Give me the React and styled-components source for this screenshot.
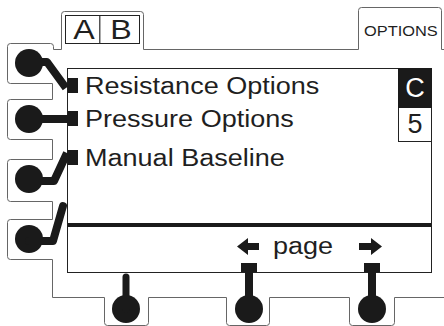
import styled, { createGlobalStyle } from "styled-components";

const GlobalStyle = createGlobalStyle`
  body {
    margin: 0;
    background: #fff;
    font-family: "Liberation Sans", Arial, sans-serif;
    color: #1f1f1f;
  }
`;

const Frame = styled.div`
  position: relative;
  width: 444px;
  height: 326px;
  overflow: hidden;
  background: #fff;
`;

const Header = styled.div`
  display: flex;
  align-items: flex-start;
  height: 68px;
`;

const TabBox = styled.div`
  display: flex;
  box-sizing: border-box;
  width: 75px;
  height: 29px;
  margin: 15px 0 0 65px;
  border: 1px solid #222;
`;

const TabCell = styled.div`
  width: ${(p) => (p.$first ? "36px" : "auto")};
  flex: ${(p) => (p.$first ? "none" : "1")};
  border-left: ${(p) => (p.$first ? "none" : "1px solid #222")};
  text-align: center;
  font-size: 28px;
  line-height: 27px;
  transform: scaleX(1.15);
`;

const OptionsLabel = styled.div`
  width: 64px;
  margin: 23px 16px 0 auto;
  font-size: 14px;
  line-height: 16px;
  white-space: nowrap;
  transform: scaleX(1.17);
  transform-origin: left;
`;

const Screen = styled.div`
  box-sizing: border-box;
  display: flex;
  flex-direction: column;
  width: 365px;
  height: 205px;
  margin-left: 67px;
  border: 1px solid #222;
`;

const TopArea = styled.div`
  display: flex;
  height: 154px;
`;

const Menu = styled.div`
  flex: 1;
  padding-top: 3px;
`;

const MenuRow = styled.div`
  display: flex;
  align-items: flex-start;
  margin-top: ${(p) => p.$gap || 0}px;
`;

const Bullet = styled.span`
  width: 10px;
  height: 15px;
  margin-top: 6px;
  background: #1a1a1a;
  flex: none;
`;

const MenuLabel = styled.span`
  margin-left: 7px;
  font-size: 23.5px;
  line-height: 28px;
  white-space: nowrap;
  transform: scaleX(1.15);
  transform-origin: left;
`;

const SideColumn = styled.div`
  display: flex;
  flex-direction: column;
  width: 34px;
  margin: -1px -1px 0 0;
`;

const Indicator = styled.div`
  box-sizing: border-box;
  height: ${(p) => (p.$dark ? 40 : 34)}px;
  border: ${(p) => (p.$dark ? "none" : "1px solid #222")};
  border-top: none;
  background: ${(p) => (p.$dark ? "#1a1a1a" : "#fff")};
  color: ${(p) => (p.$dark ? "#fff" : "#1f1f1f")};
  font-size: 27px;
  line-height: ${(p) => (p.$dark ? 40 : 33)}px;
  text-align: center;
`;

const Divider = styled.div`
  height: 4px;
  background: #1a1a1a;
`;

const PageRow = styled.div`
  display: flex;
  align-items: flex-start;
  padding-left: 169px;
`;

const Arrow = styled.svg`
  margin-top: 11px;
  margin-left: ${(p) => p.$gap || 0}px;
  flex: none;
`;

const PageLabel = styled.span`
  width: 62px;
  margin: 5px 0 0 14px;
  font-size: 23.5px;
  line-height: 28px;
  transform: scaleX(1.15);
  transform-origin: left;
`;

const Overlay = styled.svg`
  position: absolute;
  inset: 0;
  pointer-events: none;
`;

const outline =
  "M444,49 H441 V10 Q441,7 438,7 H361 Q358,7 358,10 V49 H143 V14 Q143,11 140,11 H64 Q61,11 61,14 V49 H53 V46 Q53,43 50,43 H10 Q7,43 7,46 V80 Q7,83 10,83 H52 V99 H10 Q7,99 7,102 V136 Q7,139 10,139 H52 V159 H10 Q7,159 7,162 V198 Q7,201 10,201 H52 V219 H10 Q7,219 7,222 V256 Q7,259 10,259 H52 V297 H104 V322 Q104,325 107,325 H145 Q148,325 148,322 V297 H226 V322 Q226,325 229,325 H266 Q269,325 269,322 V297 H349 V322 Q349,325 352,325 H391 Q394,325 394,322 V297 H444";

const menuItems = [
  { label: "Resistance Options", gap: 0 },
  { label: "Pressure Options", gap: 5 },
  { label: "Manual Baseline", gap: 11 },
];

function Knobs() {
  const ink = "#1a1a1a";
  return (
    <Overlay width="444" height="326" viewBox="0 0 444 326">
      <path d={outline} transform="translate(0.5 0.5)" fill="none" stroke="#666" strokeWidth="1" />
      <g fill={ink}>
        <circle cx="29" cy="63" r="14" />
        <circle cx="29" cy="119" r="14" />
        <circle cx="29" cy="179" r="14" />
        <circle cx="29" cy="239" r="14" />
        <circle cx="126" cy="309" r="14" />
        <circle cx="249" cy="309" r="14" />
        <circle cx="372" cy="309" r="14" />
        <rect x="241" y="263" width="16" height="9" />
        <rect x="364" y="263" width="16" height="9" />
      </g>
      <g fill="none" stroke={ink} strokeWidth="8" strokeLinejoin="round">
        <path d="M29,62 H47 L66,88" />
        <path d="M29,119 H68" />
        <path d="M29,181 H54 L67,153" />
        <path d="M29,241 H53 L63,206" strokeLinecap="round" />
        <path d="M126,309 V277" strokeWidth="7" strokeLinecap="round" />
        <path d="M249,309 V270" />
        <path d="M372,309 V270" />
      </g>
    </Overlay>
  );
}

export default function App() {
  return (
    <Frame>
      <GlobalStyle />
      <Header>
        <TabBox>
          <TabCell $first>A</TabCell>
          <TabCell>B</TabCell>
        </TabBox>
        <OptionsLabel>OPTIONS</OptionsLabel>
      </Header>
      <Screen>
        <TopArea>
          <Menu>
            {menuItems.map((item) => (
              <MenuRow key={item.label} $gap={item.gap}>
                <Bullet />
                <MenuLabel>{item.label}</MenuLabel>
              </MenuRow>
            ))}
          </Menu>
          <SideColumn>
            <Indicator $dark>C</Indicator>
            <Indicator>5</Indicator>
          </SideColumn>
        </TopArea>
        <Divider />
        <PageRow>
          <Arrow width="22" height="17" viewBox="0 0 22 17">
            <polygon points="0,8.5 11,0 11,5 22,5 22,12 11,12 11,17" fill="#1a1a1a" />
          </Arrow>
          <PageLabel>page</PageLabel>
          <Arrow width="23" height="17" viewBox="0 0 23 17" $gap={24}>
            <polygon points="23,8.5 12,0 12,5 0,5 0,12 12,12 12,17" fill="#1a1a1a" />
          </Arrow>
        </PageRow>
      </Screen>
      <Knobs />
    </Frame>
  );
}
